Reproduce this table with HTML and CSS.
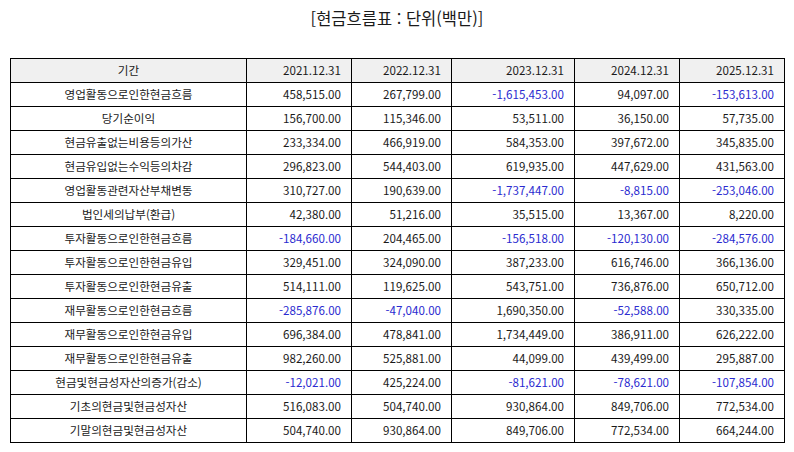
FILE: index.html
```html
<!DOCTYPE html>
<html lang="ko">
<head>
<meta charset="utf-8">
<link rel="stylesheet" href="styles.css">
</head>
<body>
<div class="page">
  <h1 class="title">[현금흐름표 : 단위(백만)]</h1>
  <table class="cf">
    <colgroup>
      <col class="c0"><col class="c1"><col class="c2"><col class="c3"><col class="c4"><col class="c5">
    </colgroup>
    <thead>
      <tr><th class="lbl">기간</th><th>2021.12.31</th><th>2022.12.31</th><th>2023.12.31</th><th>2024.12.31</th><th>2025.12.31</th></tr>
    </thead>
    <tbody>
      <tr><td class="lbl">영업활동으로인한현금흐름</td><td>458,515.00</td><td>267,799.00</td><td class="neg">-1,615,453.00</td><td>94,097.00</td><td class="neg">-153,613.00</td></tr>
      <tr><td class="lbl">당기순이익</td><td>156,700.00</td><td>115,346.00</td><td>53,511.00</td><td>36,150.00</td><td>57,735.00</td></tr>
      <tr><td class="lbl">현금유출없는비용등의가산</td><td>233,334.00</td><td>466,919.00</td><td>584,353.00</td><td>397,672.00</td><td>345,835.00</td></tr>
      <tr><td class="lbl">현금유입없는수익등의차감</td><td>296,823.00</td><td>544,403.00</td><td>619,935.00</td><td>447,629.00</td><td>431,563.00</td></tr>
      <tr><td class="lbl">영업활동관련자산부채변동</td><td>310,727.00</td><td>190,639.00</td><td class="neg">-1,737,447.00</td><td class="neg">-8,815.00</td><td class="neg">-253,046.00</td></tr>
      <tr><td class="lbl">법인세의납부(환급)</td><td>42,380.00</td><td>51,216.00</td><td>35,515.00</td><td>13,367.00</td><td>8,220.00</td></tr>
      <tr><td class="lbl">투자활동으로인한현금흐름</td><td class="neg">-184,660.00</td><td>204,465.00</td><td class="neg">-156,518.00</td><td class="neg">-120,130.00</td><td class="neg">-284,576.00</td></tr>
      <tr><td class="lbl">투자활동으로인한현금유입</td><td>329,451.00</td><td>324,090.00</td><td>387,233.00</td><td>616,746.00</td><td>366,136.00</td></tr>
      <tr><td class="lbl">투자활동으로인한현금유출</td><td>514,111.00</td><td>119,625.00</td><td>543,751.00</td><td>736,876.00</td><td>650,712.00</td></tr>
      <tr><td class="lbl">재무활동으로인한현금흐름</td><td class="neg">-285,876.00</td><td class="neg">-47,040.00</td><td>1,690,350.00</td><td class="neg">-52,588.00</td><td>330,335.00</td></tr>
      <tr><td class="lbl">재무활동으로인한현금유입</td><td>696,384.00</td><td>478,841.00</td><td>1,734,449.00</td><td>386,911.00</td><td>626,222.00</td></tr>
      <tr><td class="lbl">재무활동으로인한현금유출</td><td>982,260.00</td><td>525,881.00</td><td>44,099.00</td><td>439,499.00</td><td>295,887.00</td></tr>
      <tr><td class="lbl">현금및현금성자산의증가(감소)</td><td class="neg">-12,021.00</td><td>425,224.00</td><td class="neg">-81,621.00</td><td class="neg">-78,621.00</td><td class="neg">-107,854.00</td></tr>
      <tr><td class="lbl">기초의현금및현금성자산</td><td>516,083.00</td><td>504,740.00</td><td>930,864.00</td><td>849,706.00</td><td>772,534.00</td></tr>
      <tr><td class="lbl">기말의현금및현금성자산</td><td>504,740.00</td><td>930,864.00</td><td>849,706.00</td><td>772,534.00</td><td>664,244.00</td></tr>
    </tbody>
  </table>
</div>
</body>
</html>
```

FILE: styles.css
```css
html, body {
  margin: 0;
  padding: 0;
  background: #ffffff;
}
.page {
  padding: 6px 10px 0 10px;
  font-family: "Noto Sans CJK KR", "Noto Sans", sans-serif;
  color: #1a1a1a;
}
.title {
  margin: 0;
  text-align: center;
  font-size: 16.5px;
  font-weight: normal;
  line-height: 24px;
  height: 52px;
  color: #1a1a1a;
}
.cf {
  border-collapse: collapse;
  table-layout: fixed;
  width: 774px;
  font-size: 11.6px;
}
.c0 { width: 236px; }
.c1 { width: 105px; }
.c2 { width: 100px; }
.c3 { width: 123px; }
.c4 { width: 105px; }
.c5 { width: 105px; }
.cf th, .cf td {
  border: 1px solid #000000;
  height: 23px;
  padding: 0 10px 0 4px;
  line-height: 23px;
  text-align: right;
  font-weight: normal;
  white-space: nowrap;
  box-sizing: border-box;
}
.cf th {
  background: #f0f0f0;
}
.cf .lbl {
  text-align: center;
  padding: 0 4px;
}
.cf .neg {
  color: #2b2bd0;
}
```
